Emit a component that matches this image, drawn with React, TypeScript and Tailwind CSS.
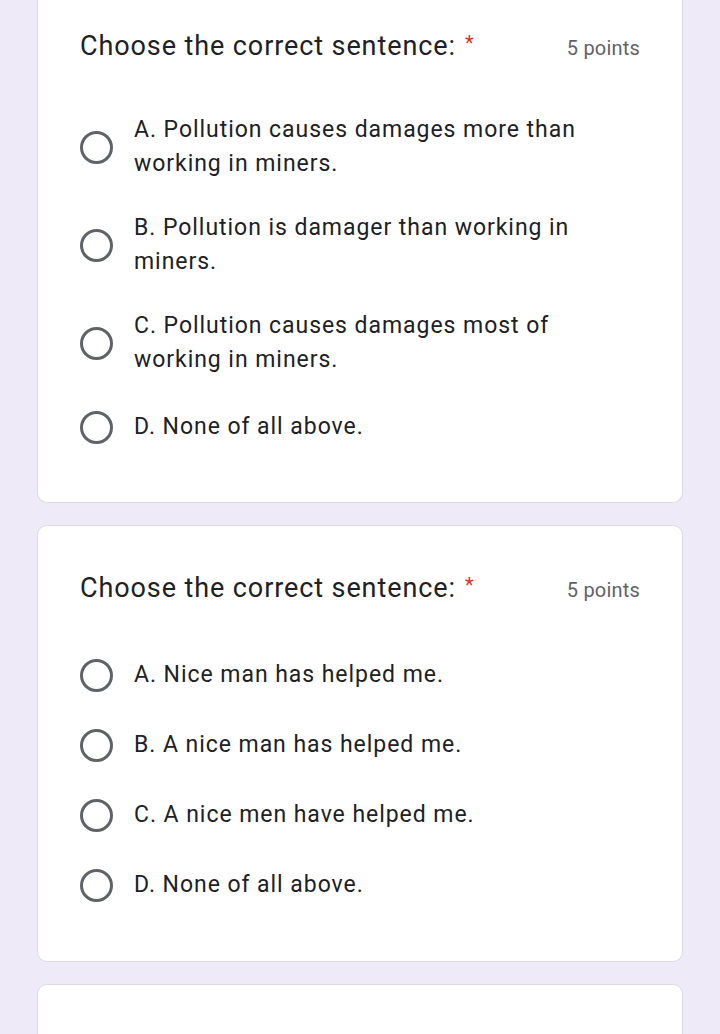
import React from "react";

const Radio = () => (
  <div className="flex h-12 w-12 shrink-0 items-center justify-center">
    <div className="h-[33px] w-[33px] rounded-full border-[3.5px] border-[#5f6368]" />
  </div>
);

const Option = ({ text }: { text: string }) => (
  <div className="flex min-h-12 items-center">
    <div className="-ml-[8px]">
      <Radio />
    </div>
    <div className="ml-[14px] py-1 text-[23px] leading-[34px] tracking-[0.95px] text-[#202124]">{text}</div>
  </div>
);

const Question = ({ options, first }: { options: string[]; first?: boolean }) => (
  <div
    className={
      first
        ? "mx-[37px] rounded-b-[10px] border-x border-b border-[#dadce0] bg-white px-[42px] pt-[29px] pb-[51px]"
        : "mx-[37px] rounded-[10px] border border-[#dadce0] bg-white px-[42px] pt-[45px] pb-[52px]"
    }
  >
    <div className="flex items-start justify-between">
      <div className="text-[27px] leading-[34px] tracking-[0.9px] text-[#202124]">
        Choose the correct sentence:
        <span className="relative -top-[5px] ml-[9px] text-[20px] text-[#d93025]">*</span>
      </div>
      <div className="pt-[2px] text-[20px] leading-[34px] tracking-[0.2px] text-[#5f6368]">5 points</div>
    </div>
    <div className="mt-[44px] flex flex-col gap-[22px]">
      {options.map((o) => (
        <Option key={o} text={o} />
      ))}
    </div>
  </div>
);

export default function App() {
  return (
    <div
      className="min-h-[1034px] bg-[#eeeaf8] pb-10"
      style={{ fontFamily: "Roboto, 'Noto Sans', sans-serif" }}
    >
      <div className="flex flex-col gap-[22px]">
        <Question
          first
          options={[
            "A. Pollution causes damages more than working in miners.",
            "B. Pollution is damager than working in miners.",
            "C. Pollution causes damages most of working in miners.",
            "D. None of all above.",
          ]}
        />
        <Question
          options={[
            "A. Nice man has helped me.",
            "B. A nice man has helped me.",
            "C. A nice men have helped me.",
            "D. None of all above.",
          ]}
        />
        <div className="mx-[37px] h-[200px] rounded-[10px] border border-[#dadce0] bg-white" />
      </div>
    </div>
  );
}
